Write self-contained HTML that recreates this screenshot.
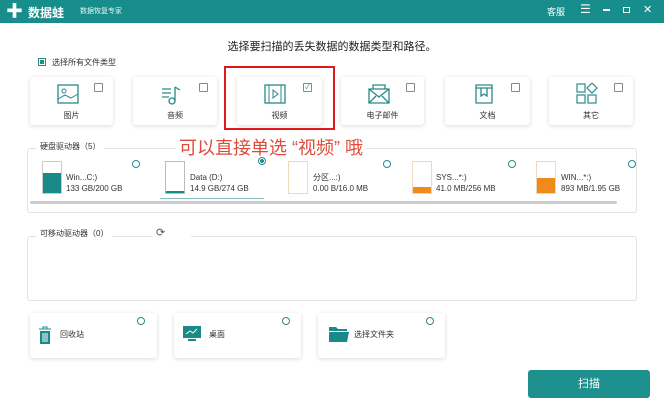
<!DOCTYPE html><html><head><meta charset="utf-8"><style>
*{margin:0;padding:0;box-sizing:border-box}
body{width:664px;height:407px;background:#fff;font-family:"Liberation Sans","Noto Sans CJK SC",sans-serif;position:relative;overflow:hidden;color:#333}
.a{position:absolute}
.hdr{left:0;top:0;width:664px;height:23px;background:#178e8c}
.card{position:absolute;background:#fff;border-radius:3px;box-shadow:0 1px 4px rgba(0,0,0,.15)}
.cb{position:absolute;width:9px;height:9px;border:1px solid #888;border-radius:1px;background:#fff}
.lbl{position:absolute;width:100%;text-align:center;font-size:8px;color:#333;top:33px}
.rad{position:absolute;width:8px;height:8px;border:1px solid #2a8a88;border-radius:50%}
.drv{position:absolute;font-size:8px;color:#333;line-height:11px}
.bar{position:absolute;width:20px;height:33px;border:1px solid #ccc;background:#fff}
</style></head><body>
<div class="a hdr"></div>
<div class="a" style="left:6px;top:3px;color:#fff;font-size:17px;font-weight:bold;line-height:17px">✚</div>
<div class="a" style="left:28px;top:4px;color:#fff;font-size:12px;font-weight:bold">数据蛙</div>
<div class="a" style="left:80px;top:6px;color:#e8f4f3;font-size:7px">数据恢复专家</div>
<div class="a" style="left:547px;top:5px;color:#fff;font-size:9px">客服</div>
<div class="a" style="left:580px;top:2px;color:#fff;font-size:12px">☰</div>
<div class="a" style="left:603px;top:9px;width:7px;height:1.5px;background:#fff"></div>
<div class="a" style="left:623px;top:7px;width:7px;height:6px;border:1.5px solid #fff"></div>
<div class="a" style="left:643px;top:3px;color:#fff;font-size:11px">✕</div>
<div class="a" style="left:0;width:664px;top:38px;text-align:center;font-size:11px;color:#222">选择要扫描的丢失数据的数据类型和路径。</div>
<div class="a" style="left:38px;top:58px;width:8px;height:8px;border:1px solid #2a8a88;padding:1px"><div style="width:4px;height:4px;background:#2a8a88"></div></div>
<div class="a" style="left:52px;top:57px;font-size:8px">选择所有文件类型</div>

<div class="card" style="left:30px;top:77px;width:83px;height:48px"><div class="cb" style="left:64px;top:6px"></div><svg class="a" style="left:27px;top:7px" width="22" height="20"><rect x="1" y="1" width="20" height="18" fill="none" stroke="#2a8a88" stroke-width="1.3"/><circle cx="7" cy="7" r="2" fill="none" stroke="#2a8a88"/><path d="M1 15 L8 11 L14 14 L21 10" fill="none" stroke="#2a8a88"/></svg><div class="lbl">图片</div></div>
<div class="card" style="left:133px;top:77px;width:84px;height:48px"><div class="cb" style="left:66px;top:6px"></div><svg class="a" style="left:27px;top:7px" width="22" height="22"><path d="M2 5h9M2 9h9M2 13h7M15 3v14M15 3l5 3" fill="none" stroke="#2a8a88" stroke-width="1.3"/><circle cx="12" cy="17" r="3" fill="none" stroke="#2a8a88" stroke-width="1.3"/></svg><div class="lbl">音频</div></div>
<div class="card" style="left:237px;top:77px;width:85px;height:48px"><div class="cb" style="left:66px;top:6px;font-size:7px;line-height:7px;text-align:center;color:#2a8a88">✓</div><svg class="a" style="left:27px;top:7px" width="22" height="20"><rect x="1" y="1" width="20" height="18" fill="none" stroke="#2a8a88" stroke-width="1.3"/><path d="M5 1v18M17 1v18M9 6l5 4-5 4z" fill="none" stroke="#2a8a88"/></svg><div class="lbl">视频</div></div>
<div class="card" style="left:341px;top:77px;width:83px;height:48px"><div class="cb" style="left:65px;top:6px"></div><svg class="a" style="left:27px;top:6px" width="22" height="22"><path d="M5 6V2h12v4M1 6h20v14H1zM1 6l10 8 10-8M1 20l7-7M21 20l-7-7" fill="none" stroke="#2a8a88" stroke-width="1.3"/></svg><div class="lbl">电子邮件</div></div>
<div class="card" style="left:445px;top:77px;width:85px;height:48px"><div class="cb" style="left:66px;top:6px"></div><svg class="a" style="left:29px;top:6px" width="20" height="22"><path d="M2 2h16v18H2zM2 5h16M7 5v8l3-2 3 2V5" fill="none" stroke="#2a8a88" stroke-width="1.3"/></svg><div class="lbl">文档</div></div>
<div class="card" style="left:549px;top:77px;width:84px;height:48px"><div class="cb" style="left:65px;top:6px"></div><svg class="a" style="left:27px;top:6px" width="22" height="22"><rect x="1" y="1" width="8" height="8" fill="none" stroke="#2a8a88" stroke-width="1.2"/><path d="M16 0l5 5-5 5-5-5z" fill="none" stroke="#2a8a88" stroke-width="1.2"/><rect x="1" y="12" width="8" height="8" fill="none" stroke="#2a8a88" stroke-width="1.2"/><rect x="12" y="12" width="8" height="8" fill="none" stroke="#2a8a88" stroke-width="1.2"/></svg><div class="lbl">其它</div></div>
<div class="a" style="left:224px;top:66px;width:111px;height:64px;border:2px solid #e01a1a"></div>

<div class="a" style="left:27px;top:148px;width:610px;height:65px;border:1px solid #e4e4e4;border-radius:3px"></div>
<div class="a" style="left:36px;top:141px;background:#fff;padding:0 4px;font-size:8px">硬盘驱动器（5）</div>
<div class="a" style="left:176px;top:134px;background:#fff;padding:0 3px;font-size:18px;color:#e04a3a">可以直接单选 “视频” 哦</div>
<div class="a" style="left:30px;top:201px;width:587px;height:3px;background:#ccc;border-radius:2px"></div>

<div class="bar" style="left:42px;top:161px;border-color:#ccc"><div style="position:absolute;left:0;right:0;bottom:0;height:20px;background:#1a8a88"></div></div>
<div class="drv" style="left:66px;top:172px">Win...C:)<br>133 GB/200 GB</div><div class="rad" style="left:132px;top:160px"></div>
<div class="bar" style="left:165px;top:161px;border-color:#bbb"><div style="position:absolute;left:0;right:0;bottom:0;height:2px;background:#1a8a88"></div></div>
<div class="drv" style="left:190px;top:172px">Data (D:)<br>14.9 GB/274 GB</div><div class="a" style="left:160px;top:198px;width:104px;height:1px;background:#8bb"></div><div class="rad" style="left:258px;top:157px;background:radial-gradient(#2a8a88 45%,#fff 50%)"></div>
<div class="bar" style="left:288px;top:161px;border-color:#f0d8b8"></div>
<div class="drv" style="left:313px;top:172px">分区...:)<br>0.00 B/16.0 MB</div><div class="rad" style="left:383px;top:160px"></div>
<div class="bar" style="left:412px;top:161px;border-color:#f0d8b8"><div style="position:absolute;left:0;right:0;bottom:0;height:6px;background:#f08a1a"></div></div>
<div class="drv" style="left:436px;top:172px">SYS...*:)<br>41.0 MB/256 MB</div><div class="rad" style="left:508px;top:160px"></div>
<div class="bar" style="left:536px;top:161px;border-color:#f0d8b8"><div style="position:absolute;left:0;right:0;bottom:0;height:15px;background:#f08a1a"></div></div>
<div class="drv" style="left:561px;top:172px">WIN...*:)<br>893 MB/1.95 GB</div><div class="rad" style="left:628px;top:160px"></div>

<div class="a" style="left:27px;top:236px;width:610px;height:65px;border:1px solid #e4e4e4;border-radius:3px"></div>
<div class="a" style="left:36px;top:228px;background:#fff;padding:0 4px;font-size:8px">可移动驱动器（0）</div>
<div class="a" style="left:152px;top:226px;background:#fff;padding:0 26px 0 4px;font-size:11px;color:#555">⟳</div>

<div class="card" style="left:30px;top:313px;width:127px;height:45px"><div class="rad" style="left:107px;top:4px"></div><svg class="a" style="left:9px;top:13px" width="12" height="18"><path d="M0 3h12M4 3V1h4v2" stroke="#1a8a88" fill="none"/><rect x="1" y="5" width="10" height="13" fill="#1a8a88"/><path d="M4 7v9M6 7v9M8 7v9" stroke="#fff"/></svg><div class="a" style="left:30px;top:16px;font-size:8px">回收站</div></div>
<div class="card" style="left:174px;top:313px;width:127px;height:45px"><div class="rad" style="left:108px;top:4px"></div><svg class="a" style="left:9px;top:13px" width="18" height="16"><rect x="0" y="0" width="18" height="12" fill="#1a8a88"/><path d="M3 8l4-3 3 2 4-4" stroke="#fff" fill="none"/><rect x="5" y="13" width="8" height="2" fill="#1a8a88"/></svg><div class="a" style="left:35px;top:16px;font-size:8px">桌面</div></div>
<div class="card" style="left:318px;top:313px;width:127px;height:45px"><div class="rad" style="left:108px;top:4px"></div><svg class="a" style="left:11px;top:13px" width="20" height="16"><path d="M0 1h7l2 2h9v2H0z" fill="#1a8a88"/><path d="M0 6h20l-2 10H0z" fill="#1a8a88"/></svg><div class="a" style="left:36px;top:16px;font-size:8px">选择文件夹</div></div>

<div class="a" style="left:528px;top:370px;width:122px;height:28px;background:#1e918e;border-radius:3px;color:#fff;font-size:11px;text-align:center;line-height:28px">扫描</div>
</body></html>
